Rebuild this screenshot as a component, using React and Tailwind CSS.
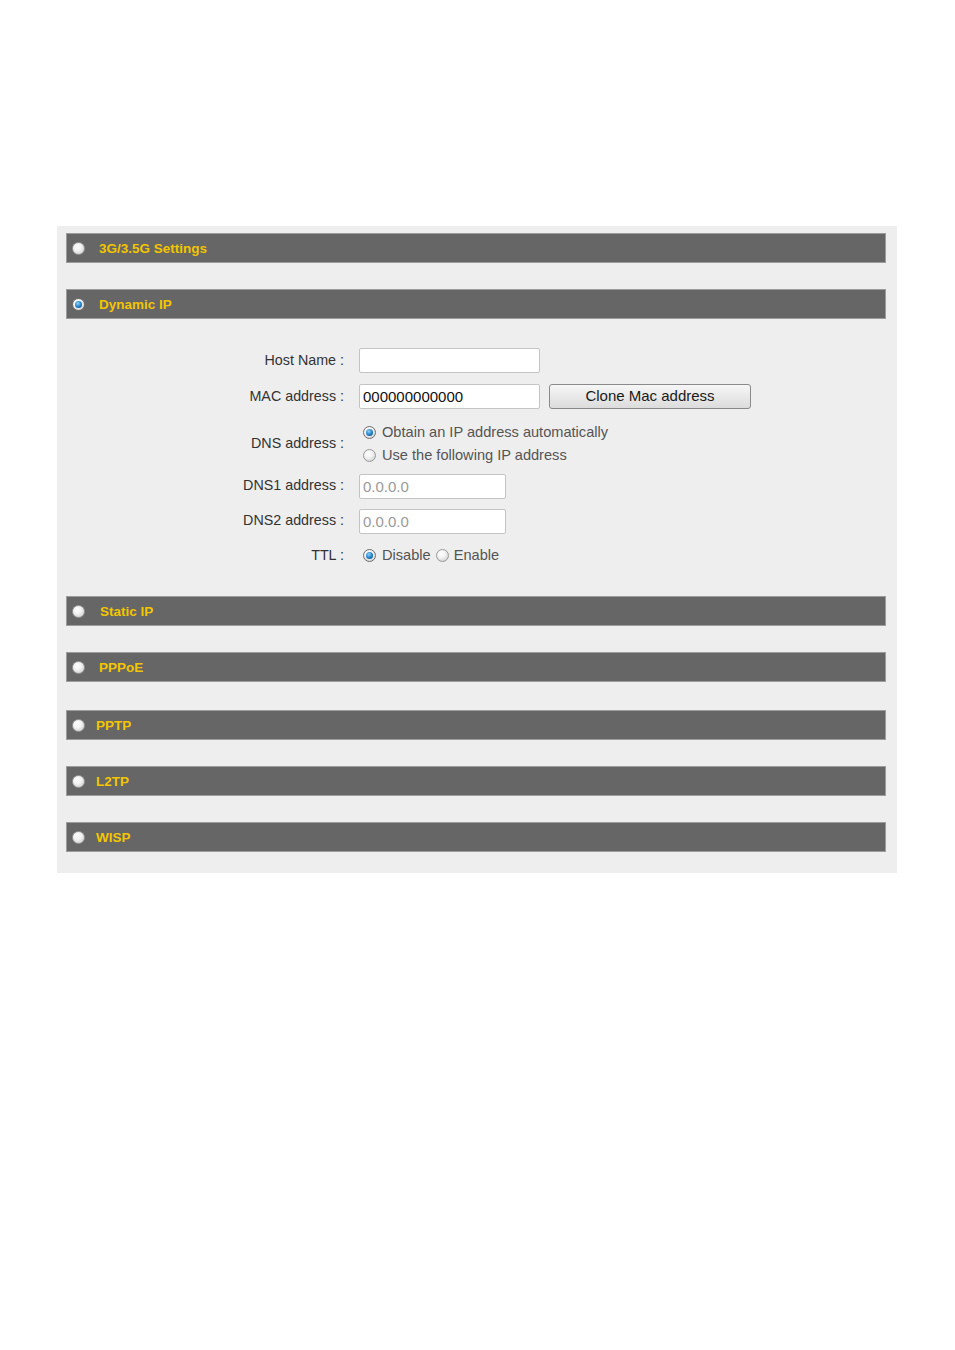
import React, { useState } from 'react';

const FONT = { fontFamily: '"Liberation Sans", Arial, sans-serif' };

// little round radio like the old IE/Windows look
const Dot = ({ on, size = 'w-[13px] h-[13px]' }) => (
  <span
    className={`${size} shrink-0 rounded-full border ${on ? 'border-[#6f6f6f]' : 'border-[#9a9a9a]'} bg-[radial-gradient(circle_at_40%_35%,#ffffff_0%,#f2f2f2_40%,#c4c4c4_100%)] flex items-center justify-center`}
  >
    {on && (
      <span className="block w-[7px] h-[7px] rounded-full bg-[#1f7fc6] bg-[radial-gradient(circle_at_40%_35%,#8fd0f8_0%,#1f7fc6_55%,#0b3f6e_100%)]" />
    )}
  </span>
);

const sections = [
  { id: '3g', label: '3G/3.5G Settings', gap: 'ml-[14px]' },
  { id: 'dhcp', label: 'Dynamic IP', gap: 'ml-[14px]' },
  { id: 'static', label: 'Static IP', gap: 'ml-[15px]' },
  { id: 'pppoe', label: 'PPPoE', gap: 'ml-[14px]' },
  { id: 'pptp', label: 'PPTP', gap: 'ml-[11px]' },
  { id: 'l2tp', label: 'L2TP', gap: 'ml-[11px]' },
  { id: 'wisp', label: 'WISP', gap: 'ml-[11px]' },
];

const Bar = ({ label, on, gap }) => (
  <div className="h-[30px] bg-[#666666] border border-[#9c9c9c] flex items-center pl-[5px]">
    <Dot on={on} />
    <span className={`${gap} pt-[3px] text-[13.5px] font-bold text-[#f2c500]`}>{label}</span>
  </div>
);

const Label = ({ children }) => (
  <div className="w-[279px] pr-[1px] text-right text-[14.3px] text-[#333]">{children}</div>
);

const DynamicForm = () => {
  const [dns, setDns] = useState('auto');
  const [ttl, setTtl] = useState('off');

  return (
    <div className="pt-[29px] pb-[29px] flex flex-col">
      <div className="flex items-center h-[25px]">
        <Label>Host Name :</Label>
        <input className="ml-[14px] w-[181px] h-[25px] bg-white border border-[#c4c4c4] rounded-[2px] px-[3px] text-[15px] outline-none" />
      </div>

      <div className="flex items-center h-[25px] mt-[11px]">
        <Label>MAC address :</Label>
        <input
          defaultValue="000000000000"
          className="ml-[14px] w-[181px] h-[25px] bg-white border border-[#c4c4c4] rounded-[2px] px-[3px] text-[15px] text-[#111] outline-none"
        />
        <button className="ml-[9px] w-[202px] h-[25px] rounded-[3px] border border-[#8a8a8a] bg-[linear-gradient(#f6f6f6,#dcdcdc)] text-[15px] text-[#1a1a1a]">
          Clone Mac address
        </button>
      </div>

      <div className="flex items-center mt-[12px]">
        <Label>DNS address :</Label>
        <div className="ml-[18px] flex flex-col text-[14.6px] text-[#555]">
          <label className="h-[23px] flex items-center gap-[6px]" onClick={() => setDns('auto')}>
            <Dot on={dns === 'auto'} size="w-[13px] h-[13px]" />
            Obtain an IP address automatically
          </label>
          <label className="h-[23px] flex items-center gap-[6px]" onClick={() => setDns('manual')}>
            <Dot on={dns === 'manual'} size="w-[13px] h-[13px]" />
            Use the following IP address
          </label>
        </div>
      </div>

      <div className="flex items-center h-[24px] mt-[7px]">
        <Label>DNS1 address :</Label>
        <input
          defaultValue="0.0.0.0"
          className="ml-[14px] w-[147px] h-[25px] bg-white border border-[#c4c4c4] rounded-[2px] px-[3px] text-[15px] text-[#9a9a9a] outline-none"
        />
      </div>

      <div className="flex items-center h-[24px] mt-[11px]">
        <Label>DNS2 address :</Label>
        <input
          defaultValue="0.0.0.0"
          className="ml-[14px] w-[147px] h-[25px] bg-white border border-[#c4c4c4] rounded-[2px] px-[3px] text-[15px] text-[#9a9a9a] outline-none"
        />
      </div>

      <div className="flex items-center h-[22px] mt-[12px]">
        <Label>TTL :</Label>
        <div className="ml-[18px] flex items-center text-[14.6px] text-[#555]">
          <label className="flex items-center gap-[6px]" onClick={() => setTtl('off')}>
            <Dot on={ttl === 'off'} size="w-[13px] h-[13px]" />
            Disable
          </label>
          <label className="ml-[5px] flex items-center gap-[5px]" onClick={() => setTtl('on')}>
            <Dot on={ttl === 'on'} size="w-[13px] h-[13px]" />
            Enable
          </label>
        </div>
      </div>
    </div>
  );
};

export default function App() {
  return (
    <div className="min-h-[1350px] bg-white pt-[226px]" style={FONT}>
      <div className="ml-[57px] w-[840px] bg-[#eeeeee] pt-[7px] pb-[21px] pl-[9px] pr-[11px]">
        {sections.map((s, i) => (
          <div key={s.id} className={i === 0 || s.id === 'static' ? '' : s.id === 'pptp' ? 'mt-[28px]' : 'mt-[26px]'}>
            <Bar label={s.label} on={s.id === 'dhcp'} gap={s.gap} />
            {s.id === 'dhcp' && <DynamicForm />}
          </div>
        ))}
      </div>
    </div>
  );
}
